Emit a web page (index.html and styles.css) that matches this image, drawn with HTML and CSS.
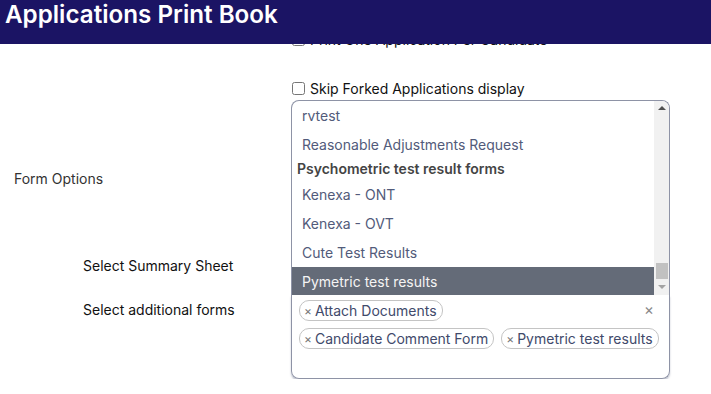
FILE: index.html
```html
<!DOCTYPE html>
<html lang="en">
<head>
    <meta charset="UTF-8">
    <meta name="viewport" content="width=device-width, initial-scale=1.0">
    <title>Applications Print Book</title>
    <link rel="stylesheet" href="styles.css">
</head>
<body>

<header class="topbar">
    <h1>Applications Print Book</h1>
</header>

<div class="page">
    <div class="form-row options-row">
        <div class="row-label options-label">Form Options</div>
        <div class="row-field">
            <label class="check"><input type="checkbox"> Print One Application Per Candidate</label>
            <label class="check"><input type="checkbox"> Skip Forked Applications display</label>
        </div>
    </div>

    <div class="form-row summary-row">
        <div class="row-label indent">Select Summary Sheet</div>
        <div class="row-field">
            <div class="single-select"></div>
        </div>
    </div>

    <div class="form-row forms-row">
        <div class="row-label indent forms-label">Select additional forms</div>
        <div class="row-field">
            <div class="multi-select">
                <!-- open dropdown sits above the field -->
                <div class="dropdown">
                    <ul class="results">
                        <li class="option">rvtest</li>
                        <li class="option">Reasonable Adjustments Request</li>
                        <li class="group">Psychometric test result forms</li>
                        <li class="option">Kenexa - ONT</li>
                        <li class="option">Kenexa - OVT</li>
                        <li class="option">Cute Test Results</li>
                        <li class="option active">Pymetric test results</li>
                    </ul>
                    <div class="scrollbar">
                        <span class="arrow up"></span>
                        <span class="thumb"></span>
                        <span class="arrow down"></span>
                    </div>
                </div>

                <div class="tags">
                    <span class="clear-all">×</span>
                    <span class="tag"><span class="tag-x">×</span>Attach Documents</span>
                    <span class="tag"><span class="tag-x">×</span>Candidate Comment Form</span>
                    <span class="tag"><span class="tag-x">×</span>Pymetric test results</span>
                </div>
            </div>
        </div>
    </div>
</div>

</body>
</html>
```

FILE: styles.css
```css
body {
    margin: 0;
    font-family: 'Inter', 'Open Sans', sans-serif;
    font-size: 14px;
    color: #222;
    background: #fff;
}
.topbar {
    position: fixed;
    top: 0;
    left: 0;
    right: 0;
    height: 44px;
    background-color: #1b1464;
    z-index: 5;
}
.topbar h1 {
    margin: 0;
    padding: 0 0 0 5px;
    font-size: 24.2px;
    font-weight: 600;
    line-height: 30px;
    color: #fff;
}
.page {
    padding-top: 29px;
}
.form-row {
    display: grid;
    grid-template-columns: 291px 379px;
}
.row-label {
    padding-left: 14px;
    line-height: 20px;
    color: #333;
}
.row-label.indent {
    padding-left: 83px;
    color: #111;
}
.options-label {
    padding-top: 140px;
}
.check {
    display: flex;
    align-items: center;
    height: 20px;
    margin-bottom: 29px;
    color: #111;
}
.check input {
    width: 13px;
    height: 13px;
    margin: 0 5px 0 1px;
}
.summary-row {
    margin-top: 61px;
}
.summary-row .row-label {
    align-self: center;
}
.single-select {
    height: 30px;
    border: 1px solid #aaa;
    border-radius: 4px;
}
.forms-row {
    margin-top: 13px;
}
.forms-label {
    padding-top: 5px;
}
.multi-select {
    position: relative;
    height: 83px;
    border: 1px solid #8e93a6;
    border-top: none;
    border-radius: 0 0 8px 8px;
    box-shadow: 0 2px 2px rgba(80, 90, 120, 0.35);
}
.dropdown {
    position: absolute;
    left: -1px;
    right: -1px;
    bottom: 100%;
    height: 194px;
    display: flex;
    border: 1px solid #8e93a6;
    border-bottom: none;
    border-radius: 8px 8px 0 0;
    background: #fff;
    overflow: hidden;
    z-index: 3;
}
.results {
    flex: 1;
    list-style: none;
    margin: 0;
    padding: 0;
}
.option {
    height: 29px;
    line-height: 29px;
    padding-left: 10px;
    color: #525b7a;
}
.group {
    height: 21px;
    line-height: 20px;
    padding-left: 5px;
    font-weight: 600;
    color: #444;
}
.option.active {
    background-color: #646b78;
    color: #f4f4f4;
}
.scrollbar {
    width: 15px;
    background: #f1f1f1;
    position: relative;
}
.arrow {
    position: absolute;
    left: 4px;
    width: 0;
    height: 0;
    border-left: 4px solid transparent;
    border-right: 4px solid transparent;
}
.arrow.up {
    top: 5px;
    border-bottom: 4px solid #505050;
}
.arrow.down {
    bottom: 6px;
    border-top: 4px solid #a3a3a3;
}
.thumb {
    position: absolute;
    left: 2px;
    right: 1px;
    bottom: 16px;
    height: 16px;
    background: #c1c1c1;
}
.tags {
    padding: 5px 3px 0 7px;
    font-size: 0;
}
.tag {
    display: inline-flex;
    align-items: center;
    height: 19px;
    margin: 0 7px 7px 0;
    padding: 0 5px 0 4px;
    border: 1px solid #c4c4c4;
    border-radius: 10px;
    font-size: 14px;
    color: #414a6b;
    vertical-align: top;
}
.tag-x {
    color: #777;
    font-size: 12px;
    margin-right: 3px;
}
.clear-all {
    float: right;
    margin: 0 12px 0 60px;
    line-height: 19px;
    font-size: 15px;
    color: #888;
}
```
